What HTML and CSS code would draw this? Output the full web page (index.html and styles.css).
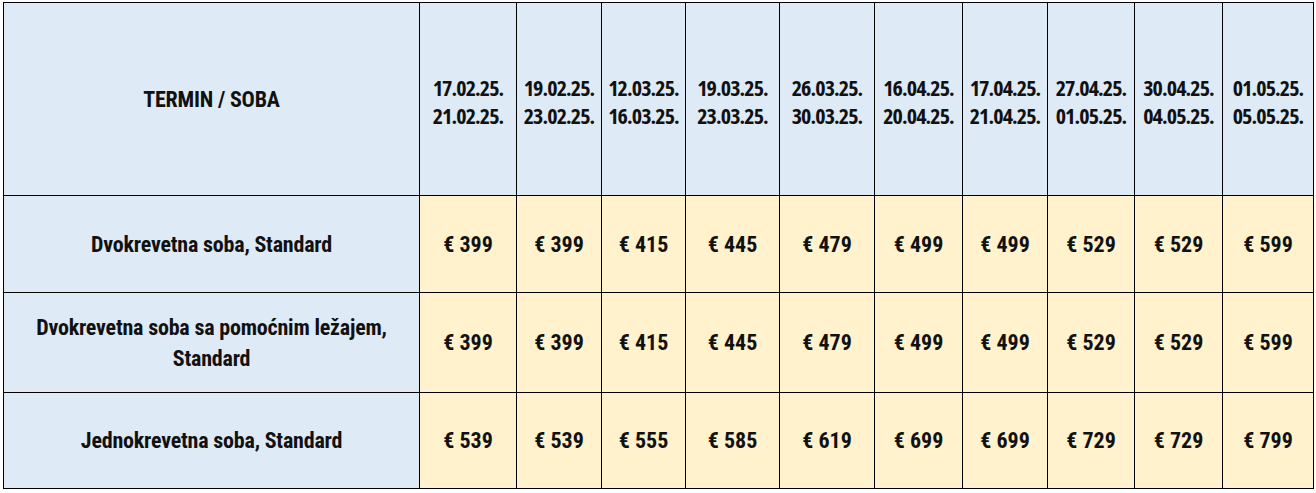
FILE: index.html
```html
<!DOCTYPE html>
<html lang="hr">
<head>
<meta charset="utf-8">
<title>Cjenik</title>
<link rel="stylesheet" href="styles.css">
</head>
<body>
<div class="wrap">
<table class="prices">
  <colgroup>
    <col class="c-room">
    <col class="c1"><col class="c2"><col class="c3"><col class="c4"><col class="c5">
    <col class="c6"><col class="c7"><col class="c8"><col class="c9"><col class="c10">
  </colgroup>
  <thead>
    <tr class="head">
      <th class="room">TERMIN / SOBA</th>
      <th class="date">17.02.25.<br>21.02.25.</th>
      <th class="date">19.02.25.<br>23.02.25.</th>
      <th class="date">12.03.25.<br>16.03.25.</th>
      <th class="date">19.03.25.<br>23.03.25.</th>
      <th class="date">26.03.25.<br>30.03.25.</th>
      <th class="date">16.04.25.<br>20.04.25.</th>
      <th class="date">17.04.25.<br>21.04.25.</th>
      <th class="date">27.04.25.<br>01.05.25.</th>
      <th class="date">30.04.25.<br>04.05.25.</th>
      <th class="date">01.05.25.<br>05.05.25.</th>
    </tr>
  </thead>
  <tbody>
    <tr class="r1">
      <th class="room">Dvokrevetna soba, Standard</th>
      <td>€ 399</td><td>€ 399</td><td>€ 415</td><td>€ 445</td><td>€ 479</td>
      <td>€ 499</td><td>€ 499</td><td>€ 529</td><td>€ 529</td><td>€ 599</td>
    </tr>
    <tr class="r2">
      <th class="room two">Dvokrevetna soba sa pomoćnim ležajem,<br>Standard</th>
      <td>€ 399</td><td>€ 399</td><td>€ 415</td><td>€ 445</td><td>€ 479</td>
      <td>€ 499</td><td>€ 499</td><td>€ 529</td><td>€ 529</td><td>€ 599</td>
    </tr>
    <tr class="r3">
      <th class="room">Jednokrevetna soba, Standard</th>
      <td>€ 539</td><td>€ 539</td><td>€ 555</td><td>€ 585</td><td>€ 619</td>
      <td>€ 699</td><td>€ 699</td><td>€ 729</td><td>€ 729</td><td>€ 799</td>
    </tr>
  </tbody>
</table>
</div>
</body>
</html>
```
FILE: styles.css
```css
html, body {
  margin: 0;
  padding: 0;
  background: #ffffff;
}
.wrap {
  padding: 2px 0 0 3px;
}
.prices {
  border-collapse: collapse;
  table-layout: fixed;
  width: 1311px;
  font-family: "Roboto Condensed", "Roboto", sans-serif;
  font-stretch: condensed;
  font-weight: 700;
  font-size: 22px;
  color: #111111;
}
.c-room { width: 416px; }
.c1 { width: 97px; }
.c2 { width: 85px; }
.c3 { width: 84px; }
.c4 { width: 94px; }
.c5 { width: 95px; }
.c6 { width: 88px; }
.c7 { width: 85px; }
.c8 { width: 87px; }
.c9 { width: 88px; }
.c10 { width: 91px; }
.prices th,
.prices td {
  border: 1px solid #000000;
  padding: 0;
  text-align: center;
  vertical-align: middle;
  white-space: nowrap;
}
.prices th {
  background: #deeaf6;
  font-weight: 700;
}
.prices td {
  background: #fff2cc;
}
.prices .room {
  letter-spacing: -0.2px;
}
.prices .date {
  font-family: "Open Sans", "Roboto Condensed", sans-serif;
  font-stretch: 75%;
  font-weight: 700;
  letter-spacing: -0.9px;
  line-height: 28px;
  padding-top: 3px;
}
.head th { height: 189px; }
.r1 th, .r1 td { height: 96px; }
.r2 th, .r2 td { height: 99px; }
.r3 th, .r3 td { height: 95px; }
.room.two { line-height: 31px; }
```
